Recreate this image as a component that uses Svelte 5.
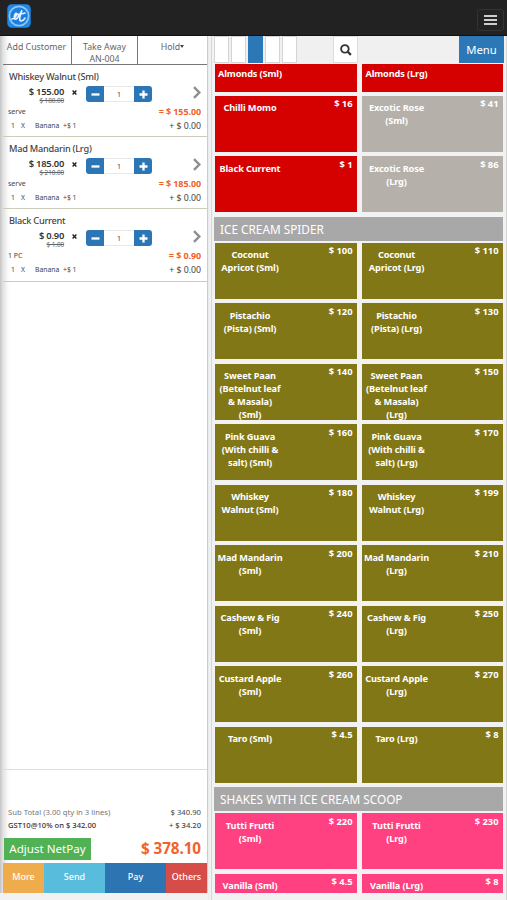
<script>
  const orders = [
    { name: 'Whiskey Walnut (Sml)', price: '155.00', old: '180.00', unit: 'serve' },
    { name: 'Mad Mandarin (Lrg)', price: '185.00', old: '210.00', unit: 'serve' },
    { name: 'Black Current', price: '0.90', old: '1.00', unit: '1 PC' }
  ];

  const pair = (lines, a, b) => [
    { lines: lines('Sml'), price: a },
    { lines: lines('Lrg'), price: b }
  ];

  const fruitRows = [
    [
      { lines: ['Chilli Momo'], price: '16' },
      { lines: ['Excotic Rose', '(Sml)'], price: '41', off: true }
    ],
    [
      { lines: ['Black Current'], price: '1' },
      { lines: ['Excotic Rose', '(Lrg)'], price: '86', off: true }
    ]
  ];

  const spiderRows = [
    pair((s) => ['Coconut', `Apricot (${s})`], '100', '110'),
    pair((s) => ['Pistachio', `(Pista) (${s})`], '120', '130'),
    pair((s) => ['Sweet Paan', '(Betelnut leaf', '& Masala)', `(${s})`], '140', '150'),
    pair((s) => ['Pink Guava', '(With chilli &', `salt) (${s})`], '160', '170'),
    pair((s) => ['Whiskey', `Walnut (${s})`], '180', '199'),
    pair((s) => ['Mad Mandarin', `(${s})`], '200', '210'),
    pair((s) => ['Cashew & Fig', `(${s})`], '240', '250'),
    pair((s) => ['Custard Apple', `(${s})`], '260', '270'),
    pair((s) => [`Taro (${s})`], '4.5', '8')
  ];

  const shakeRows = [
    pair((s) => ['Tutti Frutti', `(${s})`], '220', '230'),
    pair((s) => [`Vanilla (${s})`], '4.5', '8')
  ];
</script>

{#snippet tiles(rows, color)}
  <div class="rows">
    {#each rows as row}
      <div class="row">
        {#each row as t}
          <div class="tile {t.off ? 'off' : color}">
            <div class="name">
              {#each t.lines as l}<div>{l}</div>{/each}
            </div>
            <div class="cost">$ {t.price}</div>
          </div>
        {/each}
      </div>
    {/each}
  </div>
{/snippet}

<div class="app">
  <header>
    <svg class="logo" width="24" height="24" viewBox="0 0 24 24">
      <rect x="0.3" y="0.3" width="23.4" height="23.4" rx="4.5" fill="#2089e6" />
      <circle cx="12" cy="12" r="9.6" fill="#1c7fdf" stroke="#8cc8fa" stroke-width="1.7" />
      <path d="M5 15C7.4 14.6 9.8 12 9.8 9.8C9 8 6.6 11.6 7.4 14.4C8.4 16.6 11.4 14 15 6.4C13 11 11.6 16.4 13.8 17C15.4 17.2 17 15.8 18 14.2M9.8 10.6C13 9.8 15.6 9.8 18 9" fill="none" stroke="#e4f3ff" stroke-width="1.6" stroke-linecap="round" />
    </svg>
    <button class="burger" aria-label="Navigation"><i></i><i></i><i></i></button>
  </header>

  <main>
    <section class="bill">
      <div class="tabs">
        <div class="tab first">Add Customer</div>
        <div class="tab mid">Take Away<br />AN-004</div>
        <div class="tab last">Hold<span class="caret"></span></div>
      </div>

      {#each orders as o}
        <div class="order">
          <div class="title">{o.name}</div>
          <div class="line">
            <div class="prices">
              <b>$ {o.price}</b>
              <s>$ {o.old}</s>
            </div>
            <svg class="times" width="5" height="5" viewBox="0 0 5 5"><path d="M.6 .6L4.4 4.4M4.4 .6L.6 4.4" stroke="#222" stroke-width="1.4" /></svg>
            <div class="qty">
              <span class="step l"><svg width="9" height="9" viewBox="0 0 9 9"><path d="M.5 4.5h8" stroke="#fff" stroke-width="2.3" /></svg></span>
              <span class="num">1</span>
              <span class="step r"><svg width="9" height="9" viewBox="0 0 9 9"><path d="M.5 4.5h8M4.5 .5v8" stroke="#fff" stroke-width="2.3" /></svg></span>
            </div>
            <svg class="chev" width="9" height="13" viewBox="0 0 9 13"><path d="M2 1.2L7.3 6.5L2 11.8" fill="none" stroke="#8d8d8d" stroke-width="2.4" /></svg>
          </div>
          <div class="sum"><span class="unit">{o.unit}</span><b>= $ {o.price}</b></div>
          <div class="extra">
            <span class="n">1</span><span class="x">X</span><span class="ban">Banana</span><span>+$ 1</span>
            <span class="plus">+ $ 0.00</span>
          </div>
        </div>
      {/each}

      <div class="blank"></div>

      <div class="totals">
        <div class="sub"><span>Sub Total (3.00 qty in 3 lines)</span><span class="amt">$ 340.90</span></div>
        <div class="gst"><span>GST10@10% on $ 342.00</span><span class="amt">+ $ 34.20</span></div>
        <div class="net"><span class="adjust">Adjust NetPay</span><span class="grand">$ 378.10</span></div>
      </div>
      <div class="actions">
        <span class="more">More</span><span class="send">Send</span><span class="pay">Pay</span><span class="others">Others</span>
      </div>
    </section>

    <section class="menu">
      <div class="tools">
        <span class="pg"></span><span class="pg"></span><span class="pg on"></span><span class="pg"></span><span class="pg"></span>
        <span class="search">
          <svg width="12" height="12" viewBox="0 0 12 12"><circle cx="4.9" cy="4.9" r="3.8" fill="none" stroke="#333" stroke-width="1.8" /><path d="M7.7 7.7L10.9 10.9" stroke="#333" stroke-width="2.2" /></svg>
        </span>
        <span class="menubtn">Menu</span>
      </div>
      <div class="scroll">
        <div class="row cut">
          <div class="tile red"><div class="name"><div>Almonds (Sml)</div></div></div>
          <div class="tile red"><div class="name"><div>Almonds (Lrg)</div></div></div>
        </div>
        {@render tiles(fruitRows, 'red')}
        <h2>ICE CREAM SPIDER</h2>
        {@render tiles(spiderRows, 'olive')}
        <h2>SHAKES WITH ICE CREAM SCOOP</h2>
        {@render tiles(shakeRows, 'pink')}
      </div>
    </section>
  </main>
</div>

<style>
  :global(body) { margin: 0; background: #f2f2f2; }
  .app {
    width: 507px;
    height: 900px;
    display: flex;
    flex-direction: column;
    overflow: hidden;
    background: #f2f2f2;
    font-family: "Noto Sans", "Open Sans", sans-serif;
    white-space: nowrap;
  }
  * { box-sizing: border-box; }
  header {
    flex: none;
    height: 36px;
    background: #222;
    border-bottom: 1px solid #111;
    display: flex;
    justify-content: space-between;
    padding: 4px 3px 0 7px;
  }
  .burger {
    width: 27px;
    height: 22px;
    margin-top: 5px;
    padding: 0;
    border: 1px solid #343434;
    border-radius: 3px;
    background: none;
    display: flex;
    flex-direction: column;
    align-items: center;
    justify-content: center;
    gap: 2px;
  }
  .burger i { width: 13px; height: 2px; background: #ccc; }
  main { display: flex; height: 864px; }

  .bill {
    width: 208px;
    height: 857px;
    display: flex;
    flex-direction: column;
    padding-left: 3px;
    border-right: 1px solid #ccc;
    background: linear-gradient(90deg, #c4c4c4 0, #e2e2e2 3px, #fafafa 8px, #fff 11px);
    color: #444;
  }
  .tabs {
    flex: none;
    display: flex;
    height: 29px;
    border-bottom: 1px solid #777;
    color: #666;
    font-size: 8.8px;
    line-height: 12px;
    text-align: center;
  }
  .tab { padding-top: 5px; }
  .first { width: 69px; border-right: 1px solid #777; padding-right: 1px; }
  .mid { width: 66px; border-right: 1px solid #777; }
  .last { flex: 1; }
  .caret {
    display: inline-block;
    margin-left: 0;
    vertical-align: 2px;
    border: 2.5px solid transparent;
    border-top: 3px solid #444;
    border-bottom: 0;
  }
  .order {
    flex: none;
    height: 72.2px;
    padding: 5px 6px 0 5px;
    border-bottom: 1px solid #ccccb8;
  }
  .title { font-size: 9.2px; letter-spacing: -0.24px; line-height: 13px; font-weight: 500; padding-left: 1px; }
  .line { display: flex; height: 22px; align-items: flex-start; padding-top: 3px; }
  .prices { width: 56px; text-align: right; color: #333; }
  .prices b { display: block; font-size: 9.4px; letter-spacing: -0.25px; line-height: 12px; font-weight: 600; }
  .prices s { display: block; font-size: 6.4px; letter-spacing: -0.1px; line-height: 6px; color: #666; }
  .times { margin: 4px 0 0 8px; }
  .qty { display: flex; height: 16px; margin-left: 9px; }
  .step { width: 18px; background: #2c76b5; display: flex; align-items: center; justify-content: center; }
  .l { border-radius: 3px 0 0 3px; }
  .r { border-radius: 0 3px 3px 0; }
  .num { width: 30px; border: 1px solid #e8e8e8; border-width: 1px 0; font-size: 7px; line-height: 15px; text-align: center; background: #fff; }
  .chev { margin: 0 0 0 auto; }
  .sum { display: flex; justify-content: space-between; align-items: center; height: 13px; }
  .unit { font-size: 7px; padding-bottom: 1px; }
  .sum b { color: #f2622a; font-size: 9px; letter-spacing: -0.1px; font-weight: 700; }
  .extra { display: flex; align-items: center; height: 14px; font-size: 6.8px; padding-left: 3px; }
  .n { width: 10px; }
  .x { width: 14px; }
  .ban { width: 28px; }
  .plus { margin-left: auto; font-size: 8.7px; padding-top: 1px; }
  .blank { flex: 1; border-bottom: 1px solid #ddd; }
  .totals { height: 93px; padding: 35px 6px 0 5px; }
  .sub, .gst { display: flex; justify-content: space-between; height: 14px; line-height: 14px; font-size: 7.7px; color: #777; }
  .gst { color: #333; font-size: 7.6px; font-weight: 500; height: 13px; line-height: 13px; }
  .amt { color: #444; }
  .net { display: flex; justify-content: space-between; align-items: center; margin: 6px 0 0 -4px; height: 22px; }
  .adjust { width: 87px; height: 22px; line-height: 21px; background: #50b255; color: #fff; text-align: center; font-size: 11.6px; }
  .grand { color: #f2622a; font-weight: 700; font-size: 15.3px; letter-spacing: -0.1px; line-height: 18px; padding-bottom: 2px; }
  .actions { display: flex; flex: none; height: 30px; color: #fff; font-size: 9px; line-height: 28px; text-align: center; font-weight: 500; }
  .more { width: 41px; background: #efac4d; }
  .send { width: 61px; background: #58bddd; }
  .pay { width: 61px; background: #2c74b2; }
  .others { flex: 1; background: #d54c49; }

  .menu {
    width: 299px;
    height: 864px;
    padding-left: 6px;
    border-right: 1px solid #d6d6d6;
    background: linear-gradient(90deg, #e7ebee 0, #f4f4f4 3px, #d6d6d6 3px, #d6d6d6 4px, #f2f2f2 4px);
  }
  .tools { display: flex; height: 27px; background: #f0f0f0; }
  .pg { width: 15px; margin-right: 2px; background: #fff; border: 1px solid #d5d5d5; }
  .pg.on { background: #2c77b6; border-color: #2c77b6; }
  .search { width: 25px; margin-left: 34px; background: #fff; border: 1px solid #ddd; display: flex; align-items: center; justify-content: center; }
  .menubtn { width: 45px; margin-left: auto; margin-right: 2px; background: #2c77b6; color: #fff; font-size: 11.3px; line-height: 27px; text-align: center; }
  .scroll { height: 830px; overflow: hidden; padding: 1px 4px 0 1px; }
  .row { display: grid; grid-template-columns: 141.5px 141px; column-gap: 5px; height: 56px; }
  .rows { display: flex; flex-direction: column; gap: 4.5px; }
  .tile { display: flex; justify-content: space-between; overflow: hidden; color: #fff; font-weight: 700; min-height: 0; }
  .cut { height: 27.5px; margin-bottom: 4.3px; }
  .name { width: 70px; padding-top: 5.7px; font-size: 9.2px; letter-spacing: -0.12px; line-height: 13px; display: flex; flex-direction: column; align-items: center; }
  .cut .name { padding-top: 3px; }
  .cost { padding: 1.3px 4px 0 0; font-size: 9.4px; letter-spacing: -0.05px; line-height: 13px; }
  .red { background: #d50000; }
  .off { background: #b5b0aa; }
  .olive { background: #827717; }
  .pink { background: #ff4081; }
  h2 {
    margin: 4.5px -1px 2px;
    height: 24px;
    padding-left: 6px;
    background: #a9a8a8;
    color: #fff;
    font-size: 11.8px;
    font-weight: 400;
    line-height: 24px;
  }
</style>
